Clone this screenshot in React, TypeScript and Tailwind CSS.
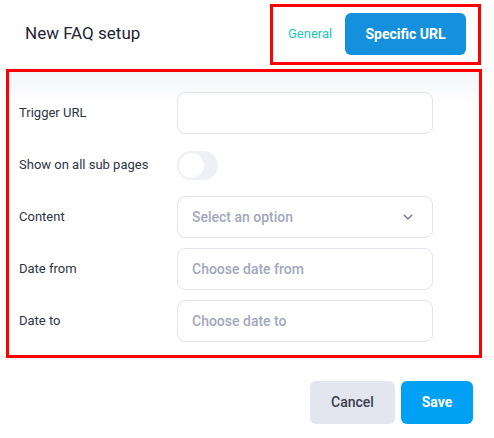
import React, { useState } from 'react';
import { ChevronDown } from 'lucide-react';

const fieldClass =
  'h-[42px] w-[256px] rounded-[8px] border border-[#e3e5ee] bg-white px-[14px] text-[14px] font-medium text-[#1f2433] outline-none placeholder:text-[#a3a8bb]';

function Row({ label, children }: { label: string; children: React.ReactNode }) {
  return (
    <div className="flex h-[42px] items-center">
      <span className="w-[158px] text-[13px] text-[#2f3444]">{label}</span>
      {children}
    </div>
  );
}

export default function App() {
  const [subPages, setSubPages] = useState(false);

  return (
    <div className="flex h-[438px] w-[494px] flex-col bg-white font-['Roboto',sans-serif]">
      <header className="relative z-10 flex h-[68px] shrink-0 items-center justify-between bg-white pl-[25px] pr-[13px] shadow-[0_2px_6px_rgba(30,40,70,0.05)]">
        <h1 className="text-[17px] text-[#1f2433]">New FAQ setup</h1>
        <div className="flex h-[61px] w-[211px] items-center border-[3px] border-[#ff0000] pl-[15px] pr-[12px]">
          <button type="button" className="text-[13px] text-[#22c7b8]">
            General
          </button>
          <button
            type="button"
            className="ml-auto h-[42px] w-[121px] rounded-[6px] bg-[#1590dd] text-[14px] font-bold text-white"
          >
            Specific URL
          </button>
        </div>
      </header>

      <div className="relative z-10 mx-[6px] mt-[1px] h-[289px] w-[476px] shrink-0 border-[3px] border-[#ff0000] bg-[linear-gradient(to_bottom,#f3f4f7,#ffffff_32px)]">
        <div className="flex flex-col gap-[10px] pl-[10px] pt-[20px]">
          <Row label="Trigger URL">
            <input className={fieldClass} />
          </Row>
          <Row label="Show on all sub pages">
            <button
              type="button"
              onClick={() => setSubPages(!subPages)}
              className={`flex h-[29px] w-[41px] items-center rounded-full px-[2px] ${
                subPages ? 'justify-end bg-[#1590dd]' : 'justify-start bg-[#eef0f4]'
              }`}
            >
              <span className="h-[25px] w-[25px] rounded-full bg-white" />
            </button>
          </Row>
          <Row label="Content">
            <div className={`${fieldClass} flex items-center justify-between pr-[16px]`}>
              <span className="text-[#a3a8bb]">Select an option</span>
              <ChevronDown className="h-[16px] w-[16px] text-[#6b7080]" strokeWidth={1.75} />
            </div>
          </Row>
          <Row label="Date from">
            <input className={fieldClass} placeholder="Choose date from" />
          </Row>
          <Row label="Date to">
            <input className={fieldClass} placeholder="Choose date to" />
          </Row>
        </div>
      </div>

      <footer className="-mt-[2px] flex justify-end gap-[6px] border-t border-[#eef0f4] pr-[21px] pt-[24px]">
        <button
          type="button"
          className="h-[43px] w-[85px] rounded-[6px] bg-[#e4e6ef] text-[14px] font-medium text-[#3a3f50]"
        >
          Cancel
        </button>
        <button
          type="button"
          className="h-[43px] w-[72px] rounded-[6px] bg-[#00a0f4] text-[14px] font-bold text-white"
        >
          Save
        </button>
      </footer>
    </div>
  );
}
